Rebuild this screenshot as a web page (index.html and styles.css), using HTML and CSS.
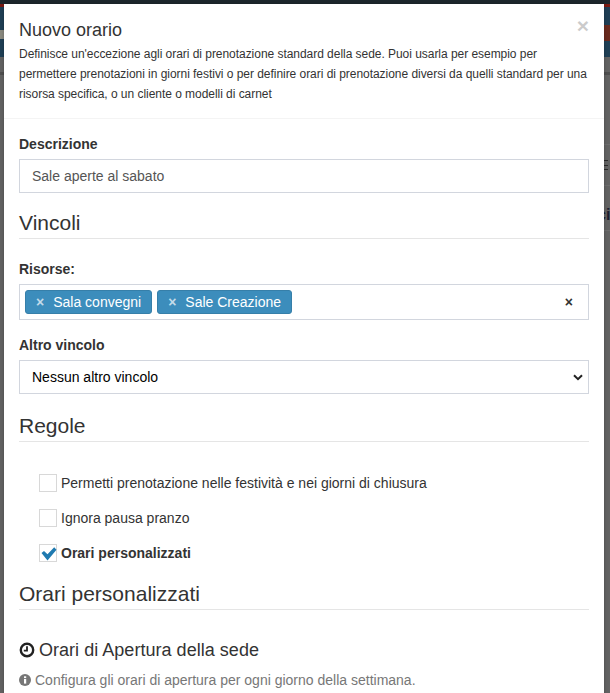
FILE: index.html

```html
<!DOCTYPE html>
<html lang="en">
<head>
  <meta charset="UTF-8" />
  <meta name="viewport" content="width=device-width, initial-scale=1.0" />
  <title>Nuovo orario</title>
  <link rel="stylesheet" href="styles.css">
</head>
<body>
  <span class="behind-text">ci</span>
  <div class="modal">
    <div class="modal-header">
      <span class="close">&times;</span>
      <h4 class="modal-title">Nuovo orario</h4>
      <p class="modal-desc">Definisce un'eccezione agli orari di prenotazione standard della sede. Puoi usarla per esempio per permettere prenotazioni in giorni festivi o per definire orari di prenotazione diversi da quelli standard per una risorsa specifica, o un cliente o modelli di carnet</p>
    </div>

    <div class="modal-body">
      <label class="field-label">Descrizione</label>
      <div class="form-control text-value">Sale aperte al sabato</div>

      <h3 class="section-title vincoli">Vincoli</h3>

      <label class="field-label risorse">Risorse:</label>
      <div class="select2">
        <span class="tag"><span class="tag-x">&times;</span>Sala convegni</span>
        <span class="tag"><span class="tag-x">&times;</span>Sale Creazione</span>
        <span class="clear-all">&times;</span>
      </div>

      <label class="field-label altro">Altro vincolo</label>
      <div class="form-control select-value">
        Nessun altro vincolo
        <svg class="chevron" width="10" height="7" viewBox="0 0 10 7"><path d="M1 1.2 5 5.2 9 1.2" fill="none" stroke="#222" stroke-width="2"/></svg>
      </div>

      <h3 class="section-title regole">Regole</h3>

      <div class="checks">
        <div class="check-row"><span class="icheck"></span>Permetti prenotazione nelle festività e nei giorni di chiusura</div>
        <div class="check-row"><span class="icheck"></span>Ignora pausa pranzo</div>
        <div class="check-row checked">
          <span class="icheck">
            <svg width="16" height="14" viewBox="0 0 16 14"><path d="M0.5 6 3 4 6.5 7.2 13.2 0.3 15.5 2.8 6.5 13.5Z" fill="#1f7ab0"/></svg>
          </span>Orari personalizzati
        </div>
      </div>

      <h3 class="section-title personalizzati">Orari personalizzati</h3>

      <h4 class="hours-title">
        <svg class="clock" width="16" height="16" viewBox="0 0 16 16"><circle cx="8" cy="8" r="6.2" fill="none" stroke="#222" stroke-width="2.4"/><path d="M8 4.2V8.6H4.8" fill="none" stroke="#222" stroke-width="1.8"/></svg>
        Orari di Apertura della sede
      </h4>
      <p class="hours-note">
        <svg class="info" width="12" height="12" viewBox="0 0 12 12"><circle cx="6" cy="6" r="6" fill="#777"/><rect x="5" y="5" width="2.2" height="4.6" fill="#fff"/><rect x="5" y="2.3" width="2.2" height="1.8" fill="#fff"/></svg>
        Configura gli orari di apertura per ogni giorno della settimana.
      </p>
    </div>
  </div>
</body>
</html>
```

FILE: styles.css

```css
html, body { height: 693px; overflow: hidden; }
body {
  position: relative;
  margin: 0;
  padding: 4px 6px 0 4px;
  box-sizing: border-box;
  font-family: "Liberation Sans", Arial, sans-serif;
  font-size: 14px;
  color: #333;
  /* page dimmed behind the modal: badge, hamburger bars, table lines, header bands */
  background:
    linear-gradient(#6a2a1e, #6a2a1e) 604px 25px / 6px 16px no-repeat,
    linear-gradient(#8a8a80, #8a8a80) 0 30px / 4px 9px no-repeat,
    linear-gradient(#2a2a2a, #2a2a2a) 604px 160px / 4px 1px no-repeat,
    linear-gradient(#2a2a2a, #2a2a2a) 604px 165px / 4px 1px no-repeat,
    linear-gradient(#2a2a2a, #2a2a2a) 604px 169px / 4px 1px no-repeat,
    linear-gradient(#6e6e6e, #6e6e6e) 604px 144px / 6px 1px no-repeat,
    linear-gradient(#6e6e6e, #6e6e6e) 604px 185px / 6px 1px no-repeat,
    linear-gradient(#6e6e6e, #6e6e6e) 604px 230px / 6px 1px no-repeat,
    linear-gradient(to bottom, #1d272d 0, #1d272d 4px, #7c1a12 4px, #7c1a12 7px, #1f3f55 7px, #1f3f55 57px, #636363 57px, #636363 72px, #4f4f4f 72px, #4f4f4f 75px, #636363 75px, #636363 100%);
}

.behind-text {
  position: absolute;
  left: 597px;
  top: 206px;
  font-weight: bold;
  font-size: 16px;
  color: #1c2030;
}

.modal { position: relative; background: #fff; height: 720px; box-shadow: 0 0 4px rgba(0,0,0,.25); }

.modal-header { position: relative; padding: 14px 15px 14px; border-bottom: 1px solid #f4f4f4; }
.modal-title { margin: 0 0 2px; font-size: 18px; font-weight: normal; line-height: 24px; }
.modal-desc { margin: 0; font-size: 12px; line-height: 20px; letter-spacing: -0.04px; }
.close {
  position: absolute;
  top: 9px;
  right: 15px;
  font-size: 21px;
  font-weight: bold;
  line-height: 25px;
  color: #000;
  opacity: .2;
}

.modal-body { padding: 0 15px; }

.field-label { display: block; font-weight: bold; line-height: 20px; margin-top: 15px; margin-bottom: 5px; }
.field-label.risorse { margin-top: 20px; }
.field-label.altro { margin-top: 15px; }

.form-control {
  height: 34px;
  box-sizing: border-box;
  padding: 6px 12px;
  line-height: 20px;
  border: 1px solid #d2d6de;
}
.text-value { color: #555; }
.select-value { position: relative; color: #000; }
.chevron { position: absolute; right: 5px; top: 13px; }

.section-title {
  margin: 0;
  font-size: 21px;
  font-weight: normal;
  line-height: 21px;
  padding-bottom: 5px;
  border-bottom: 1px solid #e5e5e5;
}
.section-title.vincoli { margin-top: 19px; }
.section-title.regole { margin-top: 21px; }
.section-title.personalizzati { margin-top: 21px; }

.select2 {
  display: flex;
  align-items: center;
  gap: 5px;
  height: 36px;
  box-sizing: border-box;
  padding: 0 5px;
  border: 1px solid #d2d6de;
}
.tag {
  display: flex;
  align-items: center;
  height: 24px;
  box-sizing: border-box;
  padding: 0 10px;
  color: #fff;
  background: #3c8dbc;
  border: 1px solid #367fa9;
  border-radius: 3px;
}
.tag-x { margin-right: 9px; font-weight: bold; color: rgba(255,255,255,.7); }
.clear-all { margin-left: auto; margin-right: 10px; font-weight: bold; color: #333; }

.checks { padding: 32px 0 0 20px; }
.check-row { display: flex; align-items: center; height: 18px; margin-bottom: 17px; }
.check-row.checked { font-weight: bold; }
.icheck {
  position: relative;
  flex: none;
  width: 18px;
  height: 18px;
  box-sizing: border-box;
  margin-right: 4px;
  border: 1px solid #d8d8d8;
}
.icheck svg { position: absolute; left: 1px; top: 2px; }

.hours-title { margin: 30px 0 0; font-size: 18px; font-weight: normal; line-height: 20px; letter-spacing: 0.03px; display: flex; align-items: center; gap: 4px; }
.hours-note { margin: 10px 0 0; color: #777; line-height: 20px; display: flex; align-items: center; gap: 4px; }
```
